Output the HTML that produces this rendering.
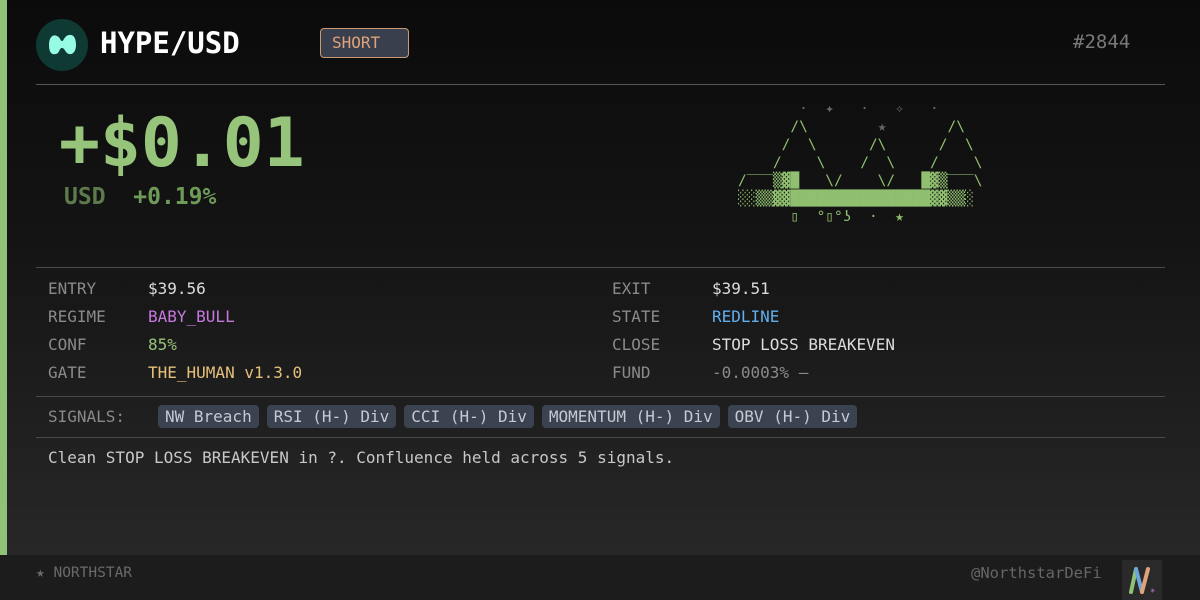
<!DOCTYPE html>
<html><head><meta charset="utf-8"><style>
*{margin:0;padding:0;box-sizing:border-box}
body{width:1200px;height:600px;overflow:hidden;position:relative;font-family:"DejaVu Sans Mono","Liberation Mono",monospace;background:linear-gradient(180deg,#0b0b0b 0%,#141414 40%,#232323 80%,#2a2a2a 100%);color:#d4d4d4}
.a{position:absolute;white-space:nowrap}
.bar{left:0;top:0;width:7px;height:555px;background:#8fc177}
.hr{position:absolute;left:36px;width:1129px;height:1px;background:#4a4a4a}
.lab{color:#8a8a8a;font-size:16px}
.val{font-size:16px;color:#dcdcdc}
.chip{display:inline-block;background:#3b4250;color:#c4c9d2;font-size:16px;height:23px;line-height:23px;padding:0 7px;border-radius:4px;margin-right:8px}
pre{font-family:"DejaVu Sans Mono",monospace;font-size:14.5px;line-height:18px;color:#8fbf6f;white-space:pre !important}
</style></head><body>
<div class="a bar"></div>
<div class="a" style="left:36px;top:19px;width:52px;height:52px;border-radius:50%;background:#0f3a33"></div>
<svg class="a" style="left:36px;top:19px" width="52" height="52" viewBox="0 0 52 52"><path d="M13 26c0-8 4-11 8-9s3 5 5 5 2-5 7-6 7 4 7 10-3 10-7 9-4-6-7-6-2 5-6 6-7-1-7-9z" fill="#97fce4"/></svg>
<div class="a" style="left:100px;top:26px;font-size:29px;font-weight:bold;color:#fff">HYPE/USD</div>
<div class="a" style="left:320px;top:28px;width:89px;height:30px;border:1px solid #c99a74;border-radius:4px;background:#3a3f4d;color:#e0a27a;font-size:16px;line-height:28px;padding-left:11px">SHORT</div>
<div class="a" style="left:1073px;top:31px;font-size:19px;color:#7a7a7a">#2844</div>
<div class="hr" style="top:84px;background:#555"></div>
<div class="a" style="left:59px;top:104px;font-size:68px;font-weight:bold;color:#97c47b">+$0.01</div>
<div class="a" style="left:64px;top:184px;font-size:23px;font-weight:bold;color:#5d7a4c;white-space:pre">USD  <span style="color:#6e9a58">+0.19%</span></div>
<pre class="a" style="left:738px;top:100px">       <span style="color:#666">·  ✦   ·   ✧   ·</span>
      /\        <span style="color:#666">★</span>       /\
     /  \      /\      /  \
    /    \    /  \    /    \
/‾‾‾▒▓█   \/    \/   █▓▒‾‾‾\
░░▒▒▓▓████████████████▓▓▒▒░
      ▯  °▯°ʖ  ·  ★</pre>
<div class="hr" style="top:267px"></div>
<div class="a lab" style="left:48px;top:279px">ENTRY</div><div class="a val" style="left:148px;top:279px">$39.56</div>
<div class="a lab" style="left:48px;top:307px">REGIME</div><div class="a val" style="left:148px;top:307px;color:#c678dd">BABY_BULL</div>
<div class="a lab" style="left:48px;top:335px">CONF</div><div class="a val" style="left:148px;top:335px;color:#98c379">85%</div>
<div class="a lab" style="left:48px;top:363px">GATE</div><div class="a val" style="left:148px;top:363px;color:#e5c07b">THE_HUMAN v1.3.0</div>
<div class="a lab" style="left:612px;top:279px">EXIT</div><div class="a val" style="left:712px;top:279px">$39.51</div>
<div class="a lab" style="left:612px;top:307px">STATE</div><div class="a val" style="left:712px;top:307px;color:#61afef">REDLINE</div>
<div class="a lab" style="left:612px;top:335px">CLOSE</div><div class="a val" style="left:712px;top:335px">STOP LOSS BREAKEVEN</div>
<div class="a lab" style="left:612px;top:363px">FUND</div><div class="a val" style="left:712px;top:363px;color:#8a8a8a">-0.0003% —</div>
<div class="hr" style="top:396px"></div>
<div class="a lab" style="left:48px;top:407px">SIGNALS:</div>
<div class="a" style="left:158px;top:405px"><span class="chip">NW Breach</span><span class="chip">RSI (H-) Div</span><span class="chip">CCI (H-) Div</span><span class="chip">MOMENTUM (H-) Div</span><span class="chip">OBV (H-) Div</span></div>
<div class="hr" style="top:437px"></div>
<div class="a val" style="left:48px;top:448px;color:#c8c8c8">Clean STOP LOSS BREAKEVEN in ?. Confluence held across 5 signals.</div>
<div class="a" style="left:0;top:555px;width:1200px;height:45px;background:#1c1c1c"></div>
<div class="a" style="left:36px;top:565px;font-size:14.5px;color:#6a6a6a">★ NORTHSTAR</div>
<div class="a" style="left:971px;top:564px;font-size:15.5px;color:#666">@NorthstarDeFi</div>
<div class="a" style="left:1122px;top:560px;width:40px;height:40px;background:#2a2a2a"></div>
<svg class="a" style="left:1122px;top:560px" width="40" height="40"><path d="M9 32L14 9" stroke="#8fc177" stroke-width="4" stroke-linecap="round"/><path d="M14 9L20 32" stroke="#6aa7d8" stroke-width="4" stroke-linecap="round"/><path d="M20 32L26 9" stroke="#e0a27a" stroke-width="4" stroke-linecap="round"/><text x="28" y="35" font-size="9" fill="#c678dd">*</text></svg>
</body></html>
